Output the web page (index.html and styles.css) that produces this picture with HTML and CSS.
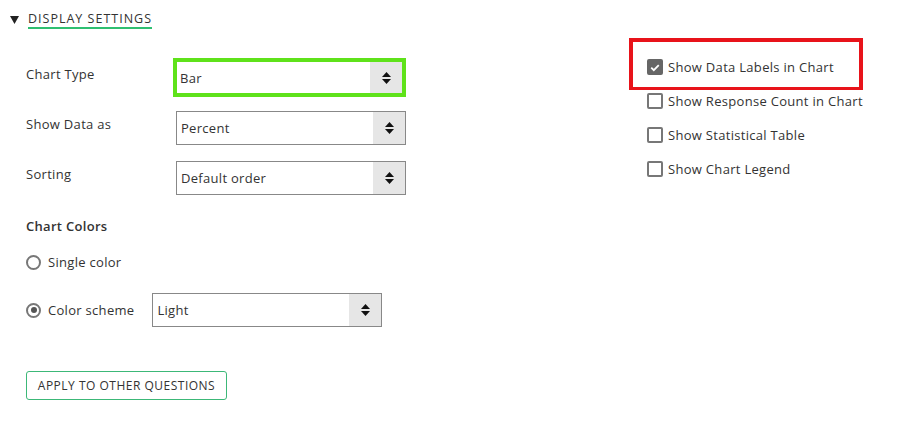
FILE: index.html
```html
<!DOCTYPE html>
<html lang="en">
<head>
  <meta charset="UTF-8">
  <link rel="stylesheet" href="styles.css">
  <title>Display Settings</title>
</head>
<body>
  <section class="panel">
    <div class="section-head">
      <svg class="caret" width="9" height="8" viewBox="0 0 9 8"><polygon points="0,0 9,0 4.5,8" fill="#222"/></svg>
      <span class="section-title">DISPLAY SETTINGS</span>
    </div>

    <div class="settings-body">
      <div class="left-col">
        <div class="field">
          <label class="field-label">Chart Type</label>
          <div class="select select-active">
            <span class="select-value">Bar</span>
            <span class="select-arrows"><svg width="9" height="12" viewBox="0 0 9 12"><polygon points="0,5 4.5,0 9,5" fill="#111"/><polygon points="0,7 9,7 4.5,12" fill="#111"/></svg></span>
          </div>
        </div>
        <div class="field">
          <label class="field-label">Show Data as</label>
          <div class="select">
            <span class="select-value">Percent</span>
            <span class="select-arrows"><svg width="9" height="12" viewBox="0 0 9 12"><polygon points="0,5 4.5,0 9,5" fill="#111"/><polygon points="0,7 9,7 4.5,12" fill="#111"/></svg></span>
          </div>
        </div>
        <div class="field">
          <label class="field-label">Sorting</label>
          <div class="select">
            <span class="select-value">Default order</span>
            <span class="select-arrows"><svg width="9" height="12" viewBox="0 0 9 12"><polygon points="0,5 4.5,0 9,5" fill="#111"/><polygon points="0,7 9,7 4.5,12" fill="#111"/></svg></span>
          </div>
        </div>

        <div class="colors-title">Chart Colors</div>
        <div class="radio-row radio-first">
          <span class="radio"></span>
          <span class="radio-label">Single color</span>
        </div>
        <div class="radio-row">
          <span class="radio radio-on"></span>
          <span class="radio-label">Color scheme</span>
          <div class="select select-scheme">
            <span class="select-value">Light</span>
            <span class="select-arrows"><svg width="9" height="12" viewBox="0 0 9 12"><polygon points="0,5 4.5,0 9,5" fill="#111"/><polygon points="0,7 9,7 4.5,12" fill="#111"/></svg></span>
          </div>
        </div>

        <button class="apply-button">APPLY TO OTHER QUESTIONS</button>
      </div>

      <div class="right-col">
        <div class="check-row check-highlight">
          <span class="checkbox checked"><svg width="15" height="15" viewBox="0 0 15 15"><path d="M2.8 7.6 L6 10.8 L12.2 4.4" stroke="#fff" stroke-width="2.2" fill="none"/></svg></span>
          <span class="check-label">Show Data Labels in Chart</span>
        </div>
        <div class="check-row">
          <span class="checkbox"></span>
          <span class="check-label">Show Response Count in Chart</span>
        </div>
        <div class="check-row">
          <span class="checkbox"></span>
          <span class="check-label">Show Statistical Table</span>
        </div>
        <div class="check-row">
          <span class="checkbox"></span>
          <span class="check-label">Show Chart Legend</span>
        </div>
      </div>
    </div>
  </section>
</body>
</html>
```

FILE: styles.css
```css
body {
  margin: 0;
  padding: 0;
  background-color: #fff;
  font-family: 'Open Sans', sans-serif;
  font-size: 13px;
  letter-spacing: 0.3px;
  color: #333;
}

.panel {
  width: 901px;
  height: 424px;
}

.section-head {
  display: flex;
  align-items: center;
  padding: 10px 0 0 10px;
  height: 20px;
}

.caret {
  margin-right: 9px;
}

.section-title {
  font-size: 12.5px;
  letter-spacing: 1px;
  color: #333;
  line-height: 16px;
  border-bottom: 2px solid #2fbf71;
}

.settings-body {
  display: flex;
  padding-left: 26px;
}

.left-col {
  width: 380px;
  padding-top: 31px;
}

.field {
  display: flex;
  height: 34px;
  margin-bottom: 16px;
}

.field-label {
  width: 150px;
  padding-top: 4px;
  line-height: 18px;
}

.select {
  display: flex;
  width: 230px;
  height: 34px;
  box-sizing: border-box;
  border: 1px solid #888;
  background-color: #fff;
}

.select-active {
  width: 233px;
  height: 39px;
  margin: -3px 0 -2px -3px;
  border: 4px solid #5fe21a;
}

.select-value {
  flex: 1;
  display: flex;
  align-items: center;
  padding-left: 4px;
}

.select-active .select-value {
  padding-left: 3px;
}

.select-arrows {
  width: 32px;
  display: flex;
  align-items: center;
  justify-content: center;
  background-color: #e6e6e6;
}

.colors-title {
  font-weight: 600;
  margin-top: 22px;
  line-height: 18px;
}

.radio-row {
  display: flex;
  align-items: center;
  height: 34px;
  margin-top: 14px;
}

.radio-row.radio-first {
  margin-top: 10px;
}

.radio {
  width: 15px;
  height: 15px;
  box-sizing: border-box;
  border: 2px solid #777;
  border-radius: 50%;
  margin-right: 7px;
  position: relative;
}

.radio-on::after {
  content: "";
  position: absolute;
  left: 2.5px;
  top: 2.5px;
  width: 6px;
  height: 6px;
  border-radius: 50%;
  background-color: #555;
}

.radio-label {
  margin-right: 18px;
}

.select-scheme {
  width: 230px;
}

.apply-button {
  margin-top: 44px;
  width: 201px;
  height: 29px;
  background-color: #fff;
  border: 1px solid #3cb878;
  border-radius: 3px;
  font-family: 'Open Sans', sans-serif;
  font-size: 12px;
  letter-spacing: 0.5px;
  color: #333;
  padding: 0;
  cursor: pointer;
}

.right-col {
  margin-left: 241px;
  padding-top: 8px;
}

.check-row {
  display: flex;
  align-items: center;
  height: 34px;
}

.check-highlight {
  height: 18px;
  margin: 0 0 -6px -18px;
  padding: 16px 16px 11px 14px;
  border: 4px solid #e8131a;
  border-bottom-width: 3px;
}

.checkbox {
  width: 16px;
  height: 16px;
  box-sizing: border-box;
  border: 2px solid #777;
  border-radius: 2px;
  margin-right: 5px;
  display: flex;
  align-items: center;
  justify-content: center;
}

.checkbox.checked {
  background-color: #666;
  border-color: #666;
}

.check-label {
  line-height: 18px;
}
```
